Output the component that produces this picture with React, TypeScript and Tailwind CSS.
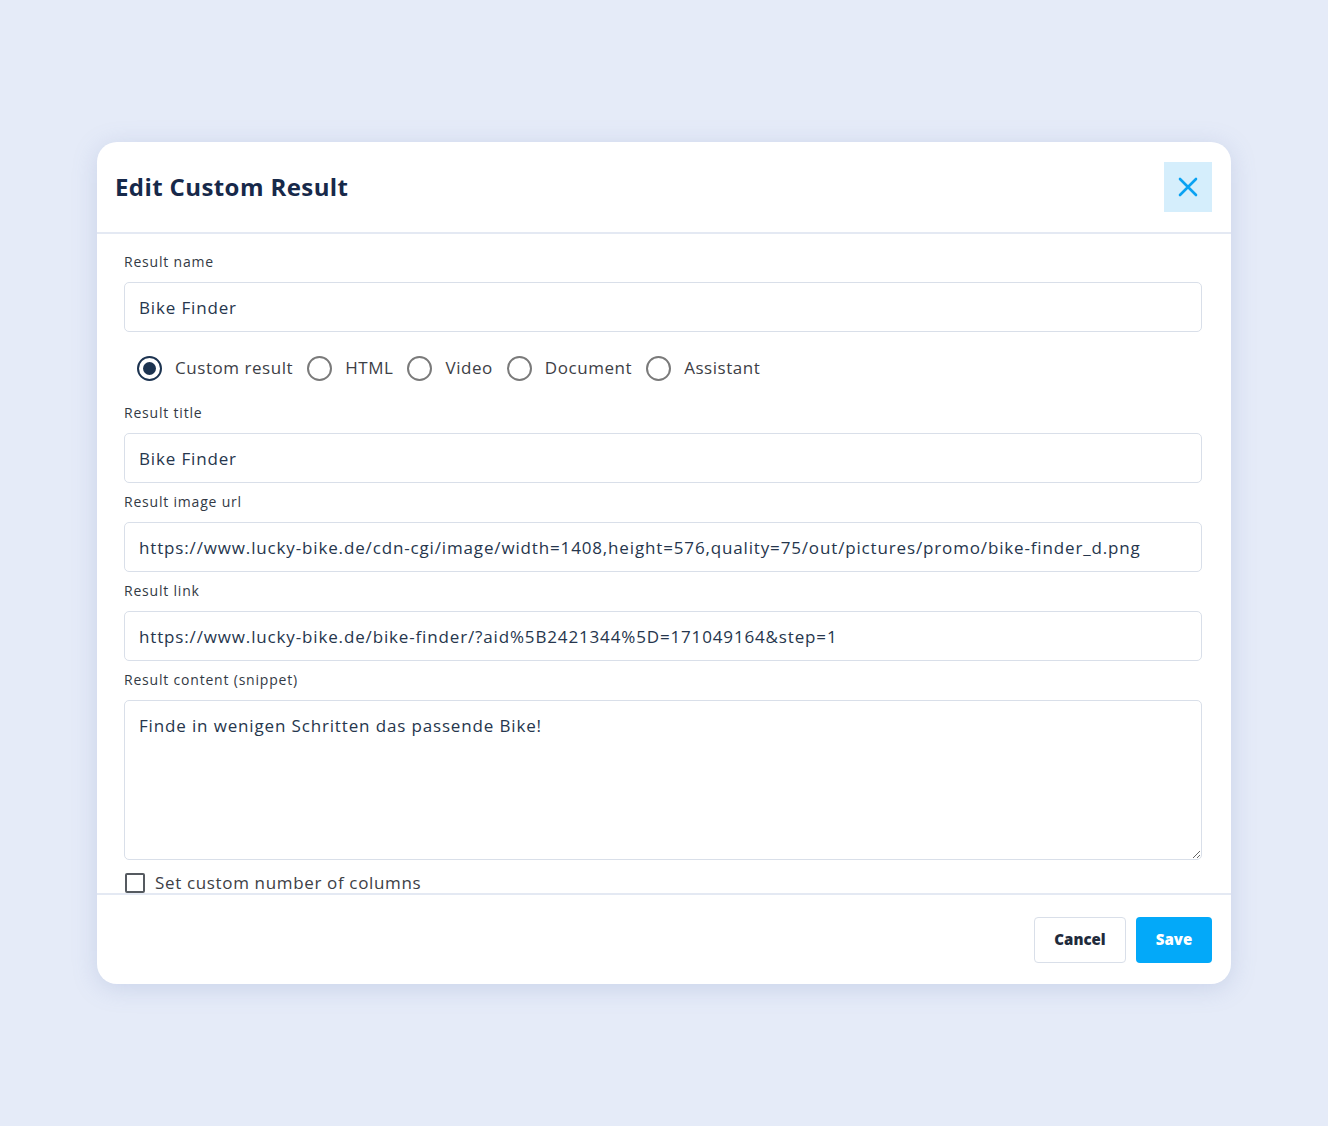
import React from "react";

function Field({ label, value }: { label: string; value: string }) {
  return (
    <div className="flex flex-col">
      <label className="mb-[10px] text-[14px] leading-[20px] font-medium tracking-[0.8px] text-[#333a45]">{label}</label>
      <input
        readOnly
        value={value}
        className="h-[50px] w-full rounded-[5px] border border-[#d9dfe9] bg-white px-[14px] text-[17px] tracking-[0.85px] text-[#26364d] outline-none"
      />
    </div>
  );
}

function Radio({ label, checked }: { label: string; checked?: boolean }) {
  return (
    <label className="flex items-center gap-[13px]">
      <span
        className={`flex h-[25px] w-[25px] items-center justify-center rounded-full border-2 ${
          checked ? "border-[#1c3350]" : "border-[#7a7a7a]"
        }`}
      >
        {checked && <span className="h-[13px] w-[13px] rounded-full bg-[#1c3350]" />}
      </span>
      <span className="text-[17px] tracking-[0.55px] text-[#3d4046]">{label}</span>
    </label>
  );
}

export default function App() {
  return (
    <div
      className="min-h-screen w-full bg-[#e5ebf8] pt-[142px]"
      style={{ fontFamily: "'Open Sans', 'Noto Sans', sans-serif" }}
    >
      <div className="ml-[97px] w-[1134px] rounded-[20px] bg-white shadow-[0_4px_24px_rgba(120,140,190,0.25)]">
        <div className="flex h-[92px] items-center justify-between border-b-2 border-[#e4e9f3] pl-[18px] pr-[19px]">
          <h1 className="text-[24px] font-bold tracking-[0.4px] text-[#17294a]">Edit Custom Result</h1>
          <button className="flex h-[50px] w-[48px] items-center justify-center bg-[#d5eefc]">
            <svg width="22" height="22" viewBox="0 0 22 22" fill="none" stroke="#0aa2f2" strokeWidth="2.6" strokeLinecap="round">
              <path d="M3 3 L19 19 M19 3 L3 19" />
            </svg>
          </button>
        </div>

        <div className="flex flex-col pl-[27px] pr-[29px] pt-[18px]">
          <Field label="Result name" value="Bike Finder" />

          <div className="mt-[22px] mb-[21px] flex h-[28px] items-center gap-[14px] pl-[13px]">
            <Radio label="Custom result" checked />
            <Radio label="HTML" />
            <Radio label="Video" />
            <Radio label="Document" />
            <Radio label="Assistant" />
          </div>

          <div className="flex flex-col gap-[9px]">
            <Field label="Result title" value="Bike Finder" />
            <Field
              label="Result image url"
              value="https://www.lucky-bike.de/cdn-cgi/image/width=1408,height=576,quality=75/out/pictures/promo/bike-finder_d.png"
            />
            <Field
              label="Result link"
              value="https://www.lucky-bike.de/bike-finder/?aid%5B2421344%5D=171049164&step=1"
            />
            <div className="flex flex-col">
              <label className="mb-[10px] text-[14px] leading-[20px] font-medium tracking-[0.8px] text-[#333a45]">
                Result content (snippet)
              </label>
              <textarea
                readOnly
                value="Finde in wenigen Schritten das passende Bike!"
                className="h-[160px] w-full resize-y rounded-[5px] border border-[#d9dfe9] bg-white px-[14px] py-[12px] text-[17px] tracking-[0.85px] text-[#26364d] outline-none"
              />
            </div>
          </div>

          <label className="mt-[13px] flex h-[20px] items-center gap-[10px] pl-[1px]">
            <span className="h-[20px] w-[20px] rounded-[2px] border-2 border-[#555a60] bg-white" />
            <span className="text-[17px] tracking-[0.65px] text-[#3d4046]">Set custom number of columns</span>
          </label>
        </div>

        <div className="flex h-[91px] items-center justify-end gap-[10px] border-t-2 border-[#e4e9f3] pr-[19px]">
          <button className="h-[46px] w-[92px] rounded-[4px] border border-[#d9dfe9] bg-white text-[15px] font-extrabold text-[#1f2b3c]">
            Cancel
          </button>
          <button className="h-[46px] w-[76px] rounded-[4px] bg-[#03a9f9] text-[15px] font-extrabold text-white">
            Save
          </button>
        </div>
      </div>
    </div>
  );
}
